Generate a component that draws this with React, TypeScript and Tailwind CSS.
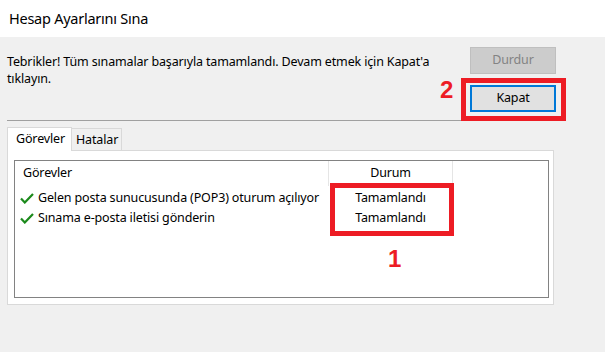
import React from 'react';

const uiFont = { fontFamily: '"Segoe UI", "Noto Sans", sans-serif' };

function CheckIcon() {
  return (
    <svg width="14" height="11" viewBox="0 0 14 11" className="shrink-0">
      <path d="M1 5.5 L4.8 9.5 L13 1" fill="none" stroke="#1c8a1c" strokeWidth="2.2" strokeLinejoin="miter" />
    </svg>
  );
}

const tasks = ['Gelen posta sunucusunda (POP3) oturum açılıyor', 'Sınama e-posta iletisi gönderin'];

export default function App() {
  return (
    <div className="relative w-[605px] h-[352px] overflow-hidden bg-[#f0f0f0] text-black" style={uiFont}>
      {/* title bar */}
      <div className="h-[37px] bg-white pl-[9px] flex items-center text-[14.5px] tracking-[-0.25px]">
        Hesap Ayarlarını Sına
      </div>

      <div className="pl-[7px] pr-[49px] text-[12.5px] tracking-[-0.15px]">
        <div className="flex justify-between pt-[10px]">
          <p className="w-[450px] mt-[6px] leading-[17px]">
            Tebrikler! Tüm sınamalar başarıyla tamamlandı. Devam etmek için Kapat'a tıklayın.
          </p>
          <div className="flex flex-col gap-[11px] w-[86px]">
            <button disabled className="h-[27px] bg-[#cccccc] border border-[#bfbfbf] text-[#838383]">
              Durdur
            </button>
            <button className="h-[27px] bg-[#e1e1e1] border-2 border-[#0078d7]">Kapat</button>
          </div>
        </div>

        <div className="mt-[8px] border-t border-[#a0a0a0]" />

        {/* tabs */}
        <div className="mt-[6px] flex items-end h-[23px]">
          <div className="relative z-10 -mb-px w-[65px] h-[24px] bg-white border border-b-0 border-[#d9d9d9] pl-[8px] leading-[22px]">
            Görevler
          </div>
          <div className="w-[50px] h-[22px] border border-l-0 border-b-0 border-[#d9d9d9] pl-[4px] leading-[22px]">
            Hatalar
          </div>
        </div>

        <div className="w-[547px] h-[155px] bg-white border border-[#d9d9d9] pl-[6px] pt-[9px]">
          <div className="w-[535px] h-[138px] border border-[#828282]">
            <div className="flex h-[25px] items-center">
              <div className="w-[313px] pl-[8px]">Görevler</div>
              <div className="w-[125px] h-full border-x border-[#e5e5e5] flex items-center justify-center">Durum</div>
            </div>
            <div className="mt-[2px]">
              {tasks.map((t) => (
                <div key={t} className="flex h-[20px] items-center">
                  <div className="w-[313px] pl-[5px] flex items-center gap-[4px] whitespace-nowrap">
                    <CheckIcon />
                    <span>{t}</span>
                  </div>
                  <div className="w-[125px] text-center">Tamamlandı</div>
                </div>
              ))}
            </div>
          </div>
        </div>
      </div>

      {/* annotations */}
      <div className="absolute left-[461px] top-[78px] w-[105px] h-[43px] border-[5px] border-[#ed1c24]" />
      <div
        className="absolute left-[440px] top-[78px] text-[24px] leading-none font-bold text-[#ed1c24]"
        style={{ fontFamily: '"Liberation Sans", Arial, sans-serif' }}
      >
        2
      </div>
      <div className="absolute left-[330px] top-[183px] w-[124px] h-[53px] border-[5px] border-[#ed1c24]" />
      <div
        className="absolute left-[388px] top-[247px] text-[24px] leading-none font-bold text-[#ed1c24]"
        style={{ fontFamily: '"Liberation Sans", Arial, sans-serif' }}
      >
        1
      </div>
    </div>
  );
}
